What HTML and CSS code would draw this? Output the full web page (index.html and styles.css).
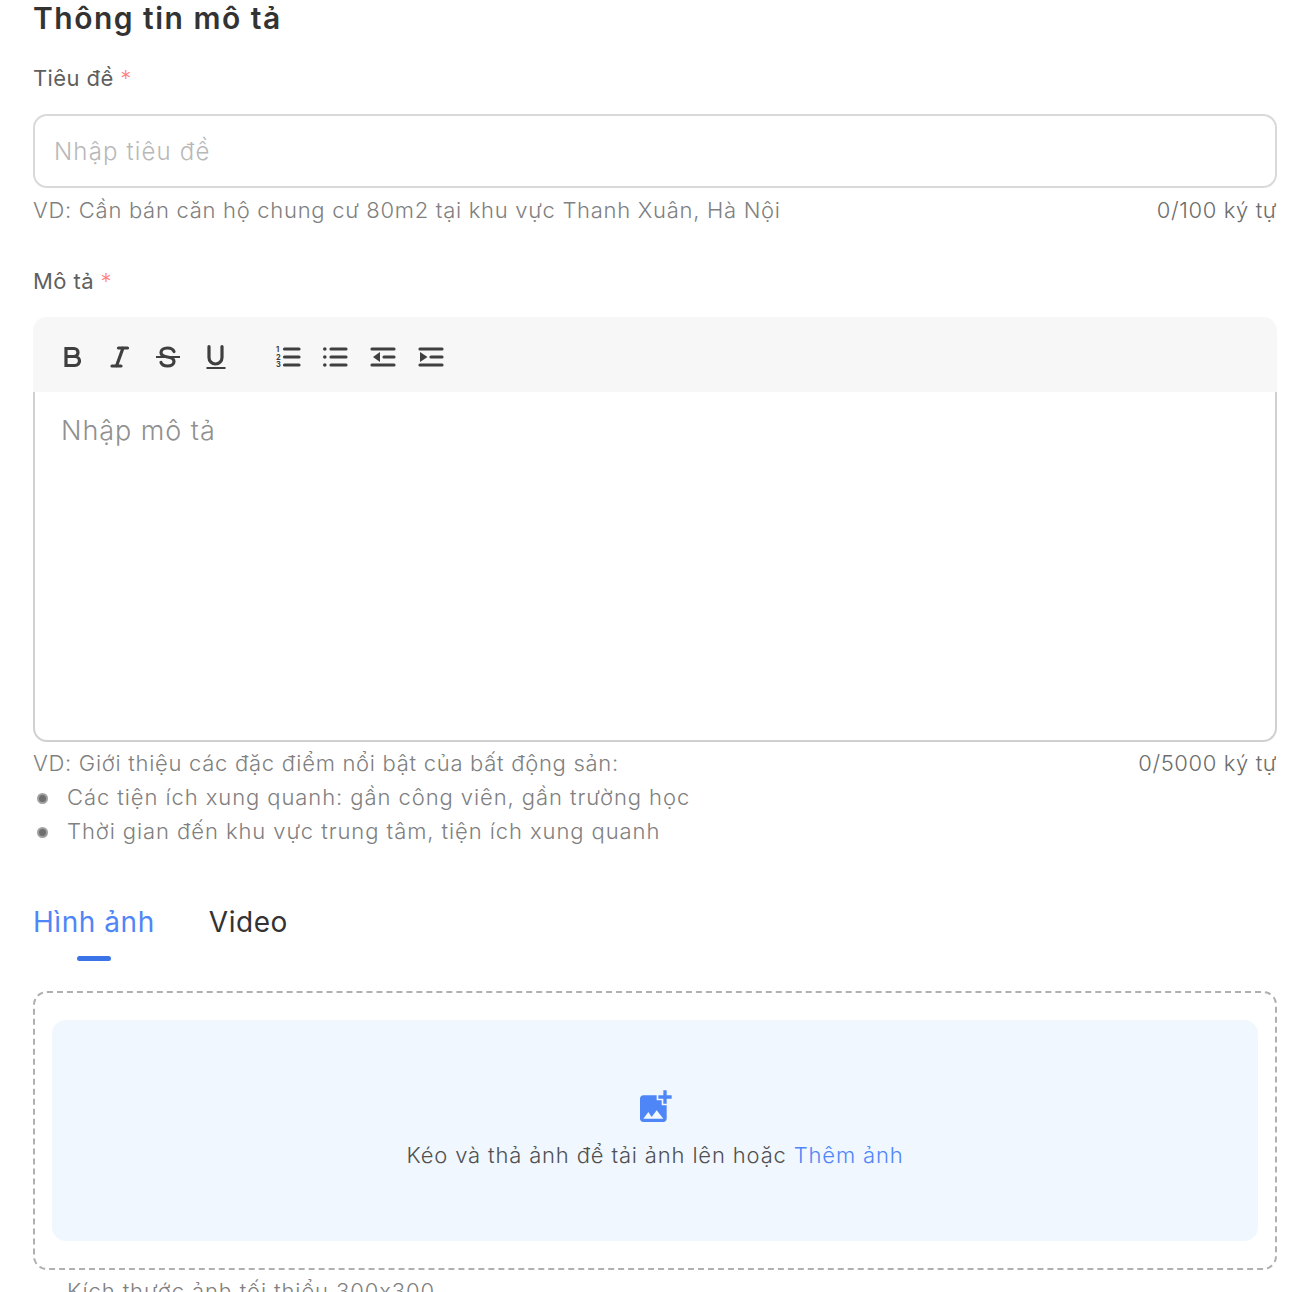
FILE: index.html
```html
<!DOCTYPE html>
<html lang="vi">
<head>
<meta charset="utf-8">
<title>Thông tin mô tả</title>
<link rel="stylesheet" href="styles.css">
</head>
<body>
<main class="page">
  <h1 class="title">Thông tin mô tả</h1>

  <div class="label label-first">Tiêu đề <span class="req">*</span></div>
  <div class="input">Nhập tiêu đề</div>
  <div class="hint-row hint-one">
    <span class="hint">VD: Cần bán căn hộ chung cư 80m2 tại khu vực Thanh Xuân, Hà Nội</span>
    <span class="count">0/100 ký tự</span>
  </div>

  <div class="label label-second">Mô tả <span class="req">*</span></div>
  <div class="toolbar">
    <div class="tool-group">
      <svg class="tool" viewBox="0 0 24 24"><path class="st" d="M6 3.500h8a4 4 0 0 1 0 8H6zM6 11.500h9a4.500 4.500 0 0 1 0 9H6z"/></svg>
      <svg class="tool" viewBox="0 0 24 24"><path class="st" d="M10.500 3h9M4 21h9M15 3 8.500 21"/></svg>
      <svg class="tool" viewBox="0 0 24 24"><path class="st" d="M18 6.500C17 4 14.500 3 11.500 3 7.500 3 5 5 5 7.500c0 3 3 4 6.500 4.500s6.500 1.500 6.500 4.500c0 2.500-2.500 4.500-6.500 4.500-3 0-5.500-1-6.500-3.500"/><path class="thin" d="M0 12h24"/></svg>
      <svg class="tool" viewBox="0 0 24 24"><path class="st" d="M5 1.500v11a6.500 6.500 0 0 0 13 0v-11"/><path class="thin" d="M2.500 23h19"/></svg>
    </div>
    <div class="tool-group">
      <svg class="tool" viewBox="0 0 24 24"><text class="num" x="0" y="7">1</text><text class="num" x="0" y="14.500">2</text><text class="num" x="0" y="22">3</text><path class="st" d="M8.500 4h14.500M8.500 12h14.500M8.500 20h14.500"/></svg>
      <svg class="tool tool-shift" viewBox="0 0 24 24"><path class="st" d="M8 4h15M8 12h15M8 20h15"/><circle cx="1.800" cy="4" r="1.800"/><circle cx="1.800" cy="12" r="1.800"/><circle cx="1.800" cy="20" r="1.800"/></svg>
      <svg class="tool tool-shift" viewBox="0 0 24 24"><path class="st" d="M1 4h22M13 12h10M1 20h22"/><path d="M2 12l7-5v10z"/></svg>
      <svg class="tool tool-shift" viewBox="0 0 24 24"><path class="st" d="M1 4h22M12 12h11M1 20h22"/><path d="M8.500 12l-7.500-5v10z"/></svg>
    </div>
  </div>
  <div class="editor">Nhập mô tả</div>
  <div class="hint-row hint-two">
    <span class="hint">VD: Giới thiệu các đặc điểm nổi bật của bất động sản:</span>
    <span class="count">0/5000 ký tự</span>
  </div>
  <ul class="examples">
    <li>Các tiện ích xung quanh: gần công viên, gần trường học</li>
    <li>Thời gian đến khu vực trung tâm, tiện ích xung quanh</li>
  </ul>

  <nav class="tabs">
    <a class="tab tab-active">Hình ảnh</a>
    <a class="tab">Video</a>
  </nav>

  <section class="upload">
    <div class="drop">
      <svg class="add-photo" viewBox="0 0 24 24"><path d="M19 7v2.990s-1.990.01-2 0V7h-3s.01-1.990 0-2h3V2h2v3h3v2h-3zm-3 4V8h-3V5H5c-1.100 0-2 .9-2 2v12c0 1.100.9 2 2 2h12c1.100 0 2-.9 2-2v-8h-3zM5 19l3-4 2 3 3-4 4 5H5z"/></svg>
      <p class="drop-text">Kéo và thả ảnh để tải ảnh lên hoặc <span class="link">Thêm ảnh</span></p>
    </div>
  </section>
  <ul class="examples notes">
    <li class="plain">Kích thước ảnh tối thiểu 300x300</li>
  </ul>
</main>
</body>
</html>
```
FILE: styles.css
```css
*, *::before, *::after { box-sizing: border-box; }
html, body { margin: 0; height: 1292px; overflow: hidden; background: #fff; }
body { font-family: Inter, "Noto Sans", sans-serif; color: #333; }
.page { padding: 0 37px 0 33px; }
.title { margin: 0; height: 36px; font-size: 30px; line-height: 36px; font-weight: 600; color: #333; letter-spacing: 1.5px; }
.label { font-size: 22px; line-height: 28px; color: #5f5f5f; letter-spacing: .4px; }
.label-first { margin-top: 28px; }
.label-second { margin-top: 40px; }
.req { color: #ff8080; font-weight: 300; }
.input { margin-top: 22px; height: 74px; border: 2px solid #d9d9d9; border-radius: 14px; padding: 1px 19px 0; display: flex; align-items: center; font-size: 24px; font-weight: 300; color: #b8b8b8; letter-spacing: 1.15px; }
.hint-row { display: flex; justify-content: space-between; font-size: 22px; font-weight: 300; line-height: 34px; color: #808080; letter-spacing: .71px; }
.hint-one { margin-top: 5px; }
.count { color: #6c6c6c; letter-spacing: .62px; }
.toolbar { margin-top: 22px; height: 75px; background: #f7f7f7; border-radius: 14px 14px 0 0; display: flex; align-items: center; padding: 5px 27px 0; gap: 48px; }
.tool-group { display: flex; gap: 24px; }
.tool { width: 24px; height: 24px; fill: #3f3f3f; overflow: visible; }
.tool-shift { margin-left: -1px; margin-right: 1px; }
.st { fill: none; stroke: #3f3f3f; stroke-width: 3.200; stroke-linecap: round; }
.thin { fill: none; stroke: #3f3f3f; stroke-width: 2; }
.num { font-size: 7.500px; font-weight: 700; font-family: Inter, sans-serif; }
.editor { height: 350px; border: 2px solid #d0d0d0; border-top: 0; border-radius: 0 0 14px 14px; padding: 21px 26px; font-size: 27px; font-weight: 300; line-height: 36px; color: #909090; letter-spacing: .95px; }
.hint-two { margin-top: 4px; }
.examples { margin: 0; padding: 0; list-style: none; font-size: 22px; font-weight: 300; line-height: 34px; color: #808080; letter-spacing: .9px; }
.examples li { display: flex; align-items: center; gap: 19px; padding-left: 4px; }
.examples li::before { content: ""; width: 11px; height: 11px; margin-top: 3px; flex: none; border-radius: 50%; background: #6f6f6f; border: 2px solid #a0a0a0; }
.examples li:not(.plain) { letter-spacing: .92px; }
.examples .plain::before { visibility: hidden; }
.tabs { margin-top: 44px; display: flex; gap: 54px; height: 100px; }
.tab { position: relative; font-size: 28px; line-height: 34px; padding-top: 13px; color: #333; letter-spacing: .55px; height: 69px; }
.tab-active { color: #4f86f7; }
.tab-active::after { content: ""; position: absolute; left: 50%; bottom: 0; width: 34px; height: 5px; margin-left: -17px; background: #3b73e8; border-radius: 3px; }
.upload { margin-top: -1px; height: 279px; border: 2px dashed #b0b0b0; border-radius: 14px; padding: 27px 17px 27px; }
.drop { height: 221px; background: #f0f7ff; border-radius: 14px; display: flex; flex-direction: column; align-items: center; padding-top: 67px; }
.add-photo { width: 40px; height: 40px; fill: #4f86f7; }
.drop-text { margin: 13px 0 0; font-size: 22px; font-weight: 300; line-height: 30px; color: #505050; letter-spacing: .84px; }
.link { color: #4f86f7; }
.notes { margin-top: 4px; }
```
